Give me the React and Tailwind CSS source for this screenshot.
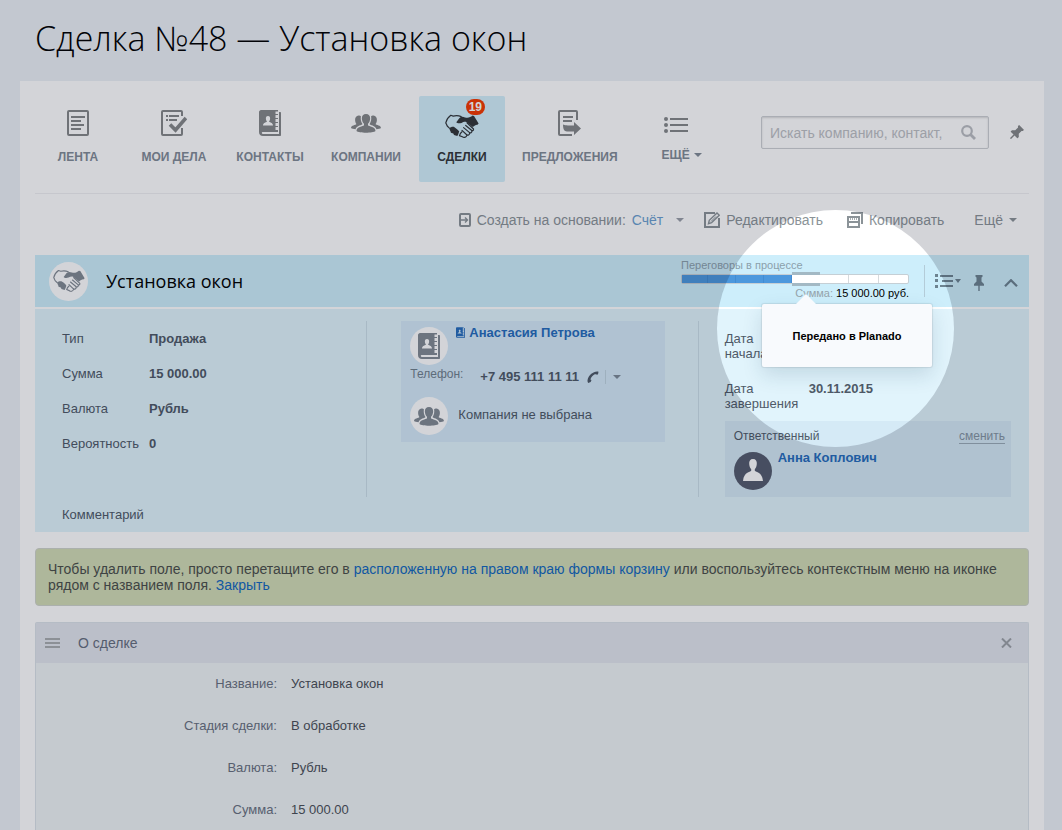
import React from "react";

function FeedIcon() {
  return (
    <svg width="22" height="26" viewBox="0 0 22 26" fill="none" stroke="currentColor" strokeWidth="2">
      <rect x="1" y="1" width="20" height="24" rx="1" />
      <path d="M4 7h14M4 11h10M4 15h13M4 19h10" />
    </svg>
  );
}

function TasksIcon() {
  return (
    <svg width="26" height="26" viewBox="0 0 26 26" fill="none" stroke="currentColor" strokeWidth="2">
      <path d="M21 6V2a1 1 0 0 0-1-1H2a1 1 0 0 0-1 1v22a1 1 0 0 0 1 1h18a1 1 0 0 0 1-1v-6" />
      <path d="M5 6h2M8 6h10M5 10h2M8 10h8" strokeWidth="1.800" />
      <path d="M9 14.500l5.500 5.500L25 8" strokeWidth="3.600" />
    </svg>
  );
}

function ContactIcon({ className = "w-[22px] h-[26px]" }) {
  return (
    <svg className={className} viewBox="0 0 22 26" fill="currentColor">
      <path
        fillRule="evenodd"
        d="M2 0H19V1.500H16.500V4H19V5H16.500V8H19V9H16.500V12H19V13H16.500V16H19V17H16.500V20H19V22H3.500C2.500 22 2.500 24 4 24H20V2H21C21.600 2 22 2.400 22 3V25C22 25.600 21.600 26 21 26H4C1.500 26 0 24.500 0 22V2C0 1 1 0 2 0ZM9 6C7.400 6 6.700 7.300 6.900 9C7 10.200 7.500 11 8 11.500C7.900 12.400 4 12.300 4 15.500H14C14 12.300 10.100 12.400 10 11.500C10.500 11 11 10.200 11.100 9C11.300 7.300 10.600 6 9 6Z"
      />
    </svg>
  );
}

function GroupIcon() {
  return (
    <svg width="30" height="19" viewBox="0 0 30 19" fill="currentColor">
      <path d="M15 0C12 0 10.600 2.200 10.900 5C11.100 7.300 12 8.800 13 9.800V11.300C12.200 12.700 5.500 12.400 5.500 17C8 19.300 22 19.300 24.500 17C24.500 12.400 17.800 12.700 17 11.300V9.800C18 8.800 18.900 7.300 19.100 5C19.400 2.200 18 0 15 0Z" />
      <path d="M7.500 1.600C8.400 1.400 9.300 1.600 9.900 2.200C9.400 4.900 10 8 11.400 9.900C11.500 11.100 5.500 11.200 4.500 15.200C2.500 15.200 1 14.700 0 14.100C0 10.800 4.800 11.300 5.400 9.900C4.600 9.200 4.200 7.600 4.100 6C4 3.600 5.300 1.800 7.500 1.600Z" />
      <path d="M22.500 1.600C21.600 1.400 20.700 1.600 20.100 2.200C20.600 4.900 20 8 18.600 9.900C18.500 11.100 24.500 11.200 25.500 15.200C27.500 15.200 29 14.700 30 14.100C30 10.800 25.200 11.300 24.600 9.900C25.400 9.200 25.800 7.600 25.900 6C26 3.600 24.700 1.800 22.500 1.600Z" />
    </svg>
  );
}

function HandshakeIcon({ className = "w-[34px] h-[25px]" }) {
  return (
    <svg className={className} viewBox="0 0 34 25">
      <path
        fill="currentColor"
        d="M11.300 8.300L14.500 3.900C16 2.500 18 2.600 20 3.400C23 4.300 25.500 3.400 27.500 1.600L29 2L33.600 9.600L32.500 10.800C30.800 10.500 29.500 12 27.800 12.900L21.300 7.900C19.500 7.400 18 8.200 16.500 8.900C14.500 9.600 12.300 9.600 11.300 8.300Z"
      />
      <path fill="currentColor" d="M4.500 14.200C5.800 13.100 8 12.300 9.800 13.400C11.500 14.600 13.400 15.900 14.200 17.600C13.500 19.500 13.300 20.700 12.300 22.100L9 20.900L8.300 19.400L5.900 18.700C5.800 17 4.300 15.800 4.500 14.200Z" />
      <g fill="none" stroke="currentColor" strokeWidth="1.200" strokeLinecap="round" strokeLinejoin="round">
        <path d="M4.500 14.200C3 13 1.700 12 1.600 10.600L.8 8.900C1.300 6.500 3.500 3 5.800 1.300L8.200 2.100C11 1.500 14 1.700 16.200 2.600" />
        <path d="M22 8.800L28.500 15C28.800 16.500 27.500 17.200 26.500 16.300L20.700 11.500" />
        <path d="M27 16.700C26.900 18.700 25.500 19.500 24.300 18.400L18.600 13.600" />
        <path d="M24.700 19C24.500 21 22.900 21.700 21.700 20.800L17 16.400" />
        <path d="M22 21.100C21.200 23.600 18.600 24 17.300 22.700L14.500 21.600C15 19.800 16 18.600 17 17.800" />
      </g>
    </svg>
  );
}

function OfferIcon() {
  return (
    <svg width="23" height="26" viewBox="0 0 23 26" fill="none" stroke="currentColor" strokeWidth="2">
      <path d="M19 10V2a1 1 0 0 0-1-1H2a1 1 0 0 0-1 1v22a1 1 0 0 0 1 1h12" />
      <path d="M5 7h10M5 11h9" strokeWidth="1.800" />
      <path d="M5 14.500c2 .9 4 1 11 1V12l7 6.500-7 6.500v-3.600H9c-2.800 0-4-2.400-4-6.900z" fill="currentColor" stroke="none" />
    </svg>
  );
}

function ListIcon({ className = "w-6 h-4" }) {
  return (
    <svg className={className} viewBox="0 0 24 16" fill="currentColor">
      <circle cx="2" cy="2" r="2" />
      <circle cx="2" cy="8" r="2" />
      <circle cx="2" cy="14" r="2" />
      <path d="M6 1h18v2H6zM6 7h18v2H6zM6 13h18v2H6z" />
    </svg>
  );
}

function ActionsIcon() {
  return (
    <svg width="18" height="14" viewBox="0 0 18 14" fill="currentColor">
      <path d="M0 0h3v3H0zM0 5h3v3H0zM0 11h3v3H0zM5 1h13v2H5zM7 6h11v2H7zM5 11h13v2H5z" />
    </svg>
  );
}

function PinIcon({ className = "w-[10px] h-4" }) {
  return (
    <svg className={className} viewBox="0 0 10 16" fill="currentColor">
      <path d="M1.500 0h7v1.800l-1 .8v4L10 9v1.800H5.700V16H4.300v-5.200H0V9l2.500-2.400v-4l-1-.8z" />
    </svg>
  );
}

function Caret() {
  return (
    <svg width="8" height="4" viewBox="0 0 8 4" fill="currentColor">
      <path d="M0 0h8L4 4z" />
    </svg>
  );
}

function SearchIcon() {
  return (
    <svg width="15" height="15" viewBox="0 0 15 15" fill="none" stroke="currentColor">
      <circle cx="6" cy="6" r="4.800" strokeWidth="2.200" />
      <path d="M9.500 9.500l4.500 4.500" strokeWidth="2.800" />
    </svg>
  );
}

function CreateIcon() {
  return (
    <svg width="12" height="14" viewBox="0 0 12 14" fill="none" stroke="currentColor">
      <rect x="1" y="1" width="10" height="12" rx="1" strokeWidth="2" />
      <path d="M2 7h6M6 4.500L8.500 7 6 9.500" strokeWidth="1.400" />
    </svg>
  );
}

function EditIcon() {
  return (
    <svg width="16" height="16" viewBox="0 0 16 16" fill="none" stroke="currentColor">
      <path d="M11 1H1v14h14V6" strokeWidth="2" />
      <path d="M4.500 11.700l.8-3.400L13 1l2.300 2.200-7.700 7.500z" strokeWidth="1.400" />
      <path d="M7 9.500l5-5" strokeWidth="1" />
    </svg>
  );
}

function CopyIcon() {
  return (
    <svg width="16" height="16" viewBox="0 0 16 16" fill="none" stroke="currentColor" strokeWidth="2">
      <path d="M4 1h11v11" />
      <rect x="1" y="5" width="11" height="10" />
      <path d="M2 10h9" />
      <path d="M3 7h7" strokeDasharray="1 1" strokeWidth="1.500" />
    </svg>
  );
}

function PhoneIcon() {
  return (
    <svg width="12" height="12" viewBox="0 0 12 12" fill="currentColor">
      <path d="M7 1.200C8.200.6 10.500 0 11.500.8L11 3.500H8.800L8.200 3C6 4 4 6 3.400 8.400L4.500 9 3.700 11 1.200 12C0 10.500.3 8 2 5.200 3.300 3.200 5.200 1.900 7 1.200z" />
    </svg>
  );
}

function PersonIcon() {
  return (
    <svg width="20" height="22" viewBox="0 0 20 22" fill="currentColor">
      <path d="M10 0C7.200 0 5.900 2 6.200 5c.2 2.500 1 4.300 2 5.200v1.600C7 13.800 1 12.500 0 22h20c-1-9.500-7-8.200-8.200-10.200v-1.600c1-.9 1.800-2.700 2-5.200C14.100 2 12.800 0 10 0z" />
    </svg>
  );
}

const navItems = [
  { label: "ЛЕНТА", icon: <FeedIcon /> },
  { label: "МОИ ДЕЛА", icon: <TasksIcon /> },
  { label: "КОНТАКТЫ", icon: <ContactIcon /> },
  { label: "КОМПАНИИ", icon: <GroupIcon /> },
  { label: "СДЕЛКИ", icon: <HandshakeIcon />, active: true, count: 19 },
  { label: "ПРЕДЛОЖЕНИЯ", icon: <OfferIcon /> },
];

const dealFields = [
  ["Тип", "Продажа"],
  ["Сумма", "15 000.00"],
  ["Валюта", "Рубль"],
  ["Вероятность", "0"],
];

const formRows = [
  ["Название:", "Установка окон"],
  ["Стадия сделки:", "В обработке"],
  ["Валюта:", "Рубль"],
  ["Сумма:", "15 000.00"],
];

const stages = ["done", "done", "done", "done", "current", "next", "next", "next"];

function MainNav() {
  return (
    <nav className="flex items-start border-b border-[#eff0f2] pb-[11px] text-[#858889]">
      <div className="flex gap-[10px]">
        {navItems.map((item) => (
          <a
            key={item.label}
            href="#"
            className={
              item.active
                ? "relative flex h-[86px] min-w-[86px] flex-col items-center rounded-xs bg-[#d3effa] px-[7px] pt-[11px] text-[#323639]"
                : "relative flex h-[86px] min-w-[86px] flex-col items-center px-[7px] pt-[11px]"
            }
          >
            <span className={item.active ? "flex h-8 items-end" : "flex h-8 items-center"}>{item.icon}</span>
            <span
              className={
                item.active
                  ? "mt-[10px] text-xs leading-4 font-bold whitespace-nowrap"
                  : "mt-[10px] text-xs leading-4 font-bold whitespace-nowrap text-[#828b96]"
              }
            >
              {item.label}
            </span>
            {item.count && (
              <span className="absolute top-[3px] right-5 rounded-full bg-[#f53a00] px-[3px] text-xs leading-4 font-bold text-white">
                {item.count}
              </span>
            )}
          </a>
        ))}
        <button type="button" className="flex h-[86px] flex-col items-start pt-[21px] pl-[27px]">
          <span className="pl-[2px]">
            <ListIcon />
          </span>
          <span className="mt-[14px] flex items-center gap-1 text-xs leading-4 font-bold text-[#828b96]">
            ЕЩЁ <Caret />
          </span>
        </button>
      </div>
      <div className="mt-5 ml-auto flex items-center">
        <form className="flex h-[33px] w-[228px] items-center rounded-xs border border-[#cdd0d3] pr-3 pl-2 shadow-[inset_0_1px_2px_rgba(0,0,0,0.15)]">
          <input
            type="text"
            aria-label="Поиск"
            placeholder="Искать компанию, контакт,"
            className="w-0 min-w-0 flex-1 text-sm placeholder:text-[#bdc0c4] outline-none"
          />
          <button type="button" aria-label="Найти" className="pl-2 text-[#bbbec2]">
            <SearchIcon />
          </button>
        </form>
        <button type="button" aria-label="Закрепить" className="mr-2 ml-[22px]">
          <PinIcon className="h-4 w-[10px] rotate-45" />
        </button>
      </div>
    </nav>
  );
}

function Toolbar() {
  return (
    <div className="mb-[9px] flex h-[52px] items-center justify-end pr-3 text-sm whitespace-nowrap text-[#8b9398]">
      <CreateIcon />
      <span className="ml-[6px]">Создать на основании:</span>
      <button type="button" className="ml-[6px] flex items-center gap-[13px] text-[#6c9fd0]">
        Счёт
        <span className="text-[#9a9fa8]">
          <Caret />
        </span>
      </button>
      <button type="button" className="ml-5 flex items-center gap-[6px]">
        <EditIcon />
        Редактировать
      </button>
      <button type="button" className="ml-6 flex items-center gap-[6px]">
        <CopyIcon />
        Копировать
      </button>
      <button type="button" className="ml-[30px] flex items-center gap-[6px]">
        Ещё <Caret />
      </button>
    </div>
  );
}

function StageProgress() {
  return (
    <div className="w-[228px] self-start pt-1 text-[11px] leading-3">
      <div className="text-[#8ba0ab]">Переговоры в процессе</div>
      <div className="mt-[3px] grid h-[10px] grid-cols-[26px_repeat(4,28px)_repeat(3,1fr)] rounded-xs border border-[#c5cfd5] bg-white">
        {stages.map((stage, i) =>
          stage === "current" ? (
            <div key={i} className="relative">
              <div className="absolute inset-x-0 -inset-y-[3px] border-y-[3px] border-[#a3b9c4] bg-white" />
              <div className="pointer-events-none absolute -top-[65px] left-1/2 z-10 -ml-[89px] size-[237px] rounded-full shadow-[0_0_0_3000px_rgba(11,16,38,0.18)]" />
              <div
                role="tooltip"
                className="absolute top-[29px] -left-[30px] z-20 w-[170px] rounded-xs bg-[#f8fafd] pt-[25px] pb-[23px] text-center text-[11px] leading-[15px] font-bold text-black shadow-[0_0_1px_1px_rgba(0,0,0,0.08),0_8px_20px_rgba(20,60,90,0.15)]"
              >
                <span className="absolute -top-[10px] left-[34px] border-x-[10px] border-b-[10px] border-x-transparent border-b-[#f8fafd]" />
                Передано в Planado
              </div>
            </div>
          ) : (
            <div
              key={i}
              className={
                stage === "done"
                  ? "border-r border-[#428cd2] bg-[#4c98dd] last:border-r-0"
                  : "border-r border-[#d5dadd] last:border-r-0"
              }
            />
          )
        )}
      </div>
      <div className="mt-[3px] text-right text-black">
        <span className="text-[#95a3ab]">Сумма:</span> 15 000.00 руб.
      </div>
    </div>
  );
}

function DealHeader() {
  return (
    <div className="flex h-[52px] items-center bg-[#cdeefb] pr-[11px] pl-[14px] text-[#7b8f9b]">
      <span className="flex size-[39px] shrink-0 items-center justify-center rounded-full bg-white text-[#828a93]">
        <HandshakeIcon className="h-6 w-8" />
      </span>
      <h2 className="ml-[18px] flex-1 font-['Open_Sans',sans-serif] text-lg text-black">Установка окон</h2>
      <StageProgress />
      <span className="ml-[15px] h-8 w-px bg-[#b4ccd8]" />
      <button type="button" aria-label="Действия" className="ml-[10px] flex items-center gap-[2px] text-[#6d8390]">
        <ActionsIcon />
        <svg width="6" height="4" viewBox="0 0 6 4" fill="currentColor">
          <path d="M0 0h6L3 4z" />
        </svg>
      </button>
      <button type="button" aria-label="Закрепить карточку" className="ml-[13px] pt-1 text-[#6d8390]">
        <PinIcon />
      </button>
      <button type="button" aria-label="Свернуть" className="ml-5 pt-1 text-[#6d8390]">
        <svg width="14" height="8" viewBox="0 0 14 8" fill="none" stroke="currentColor" strokeWidth="2.200">
          <path d="M1 7.200l6-6 6 6" />
        </svg>
      </button>
    </div>
  );
}

function DealSummary() {
  return (
    <div className="mt-[2px] bg-[#e1f4fc] pt-3 pb-[10px] text-[13px] leading-[15px] text-[#4f5a68]">
      <div className="grid grid-cols-3">
        <dl className="flex flex-col gap-5 pt-[10px] pl-[27px]">
          {dealFields.map(([name, value]) => (
            <div key={name} className="flex">
              <dt className="w-[87px]">{name}</dt>
              <dd className="font-bold">{value}</dd>
            </div>
          ))}
        </dl>
        <div className="border-l border-[#cbdfe8] pr-[33px] pl-[34px]">
          <div className="bg-[#d5eaf8] px-[9px] pt-[6px] pb-[7px]">
            <div className="flex gap-2">
              <span className="flex size-[38px] items-center justify-center rounded-full bg-white text-[#828a93]">
                <ContactIcon />
              </span>
              <a href="#" className="mt-[-2px] flex items-center gap-1 self-start font-bold text-[#256cbc]">
                <ContactIcon className="h-[11px] w-[9px]" />
                Анастасия Петрова
              </a>
            </div>
            <div className="flex pt-[2px]">
              <span className="w-[70px] text-xs leading-[15px] text-[#70808d]">Телефон:</span>
              <span className="mt-[2px] flex h-[15px] items-center font-bold">
                +7 495 111 11 11
                <span className="ml-2">
                  <PhoneIcon />
                </span>
                <span className="ml-[6px] h-[14px] w-px bg-[#bfd3e0]" />
                <button type="button" aria-label="Другие телефоны" className="ml-[7px] text-[#7d8a98]">
                  <Caret />
                </button>
              </span>
            </div>
            <div className="mt-[13px] flex items-center gap-[10px]">
              <span className="flex size-[38px] items-center justify-center rounded-full bg-white text-[#828a93]">
                <GroupIcon />
              </span>
              <span className="-mt-1">Компания не выбрана</span>
            </div>
          </div>
        </div>
        <div className="border-l border-[#cbdfe8] pr-[18px] pl-[26px]">
          <dl className="flex flex-col gap-5 pt-[10px]">
            <div>
              <dt>
                Дата
                <br />
                начала
              </dt>
            </div>
            <div className="flex">
              <dt className="w-[84px]">
                Дата
                <br />
                завершения
              </dt>
              <dd className="font-bold">30.11.2015</dd>
            </div>
          </dl>
          <div className="mt-[10px] bg-[#d5eaf6] px-[9px] pt-2 pb-[7px]">
            <div className="mr-[-3px] flex items-start justify-between text-xs leading-[14px]">
              <span>Ответственный</span>
              <button type="button" className="border-b border-[#9aabb8] text-[#8494a2]">
                сменить
              </button>
            </div>
            <div className="mt-2 flex gap-[6px]">
              <span className="flex size-[38px] items-center justify-center rounded-full bg-[#555c6e] pb-[2px] text-white">
                <PersonIcon />
              </span>
              <a href="#" className="-mt-[2px] font-bold text-[#256cbc]">
                Анна Коплович
              </a>
            </div>
          </div>
        </div>
      </div>
      <div className="pt-[10px] pl-[27px]">Комментарий</div>
    </div>
  );
}

function Hint() {
  return (
    <div className="mt-4 rounded-sm border border-[#cfd3cb] bg-[#d2dcb5] px-3 py-3 text-sm leading-4 text-[#4b4f4a]">
      Чтобы удалить поле, просто перетащите его в{" "}
      <a href="#" className="text-[#1268bd]">
        расположенную на правом краю формы корзину
      </a>{" "}
      или воспользуйтесь контекстным меню на иконке рядом с названием поля.{" "}
      <button type="button" className="text-[#1268bd]">
        Закрыть
      </button>
    </div>
  );
}

function AboutSection() {
  return (
    <section className="mt-4 flex-1 rounded-t-xs border-x border-t border-[#dbe2e8] bg-[#eef3f4]">
      <header className="flex h-10 items-center bg-[#e2e6ed] pr-4 pl-[9px] text-[#666e7e]">
        <svg width="15" height="10" viewBox="0 0 15 10" fill="#a9acaf">
          <path d="M0 0h15v2H0zM0 4h15v2H0zM0 8h15v2H0z" />
        </svg>
        <h3 className="ml-[18px] text-sm">О сделке</h3>
        <button type="button" aria-label="Закрыть раздел" className="ml-auto text-[#9da1a7]">
          <svg width="11" height="10" viewBox="0 0 11 10" fill="none" stroke="currentColor" strokeWidth="2">
            <path d="M1 .5l9 9M10 .5l-9 9" />
          </svg>
        </button>
      </header>
      <dl className="text-[13px] leading-[42px]">
        {formRows.map(([name, value]) => (
          <div key={name} className="flex gap-[14px]">
            <dt className="w-[241px] text-right text-[#697180]">{name}</dt>
            <dd className="text-[#4b5058]">{value}</dd>
          </div>
        ))}
      </dl>
    </section>
  );
}

export default function App() {
  return (
    <div className="relative flex min-h-screen flex-col overflow-hidden bg-[#ecf1f6] px-5 font-['Liberation_Sans',Arial,sans-serif]">
      <h1 className="mr-4 ml-[15px] pt-3 pb-[17px] font-['Open_Sans',sans-serif] text-[34px] leading-[52px] font-light text-black">
        Сделка №48 — Установка окон
      </h1>
      <main className="-mr-[2px] flex flex-1 flex-col bg-white px-[15px] pt-[15px]">
        <MainNav />
        <Toolbar />
        <DealHeader />
        <DealSummary />
        <Hint />
        <AboutSection />
      </main>
    </div>
  );
}
